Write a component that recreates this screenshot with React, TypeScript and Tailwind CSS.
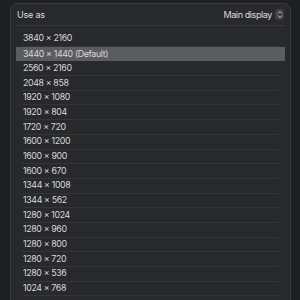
import React from "react";

const rows = [
  "3840 × 2160",
  "3440 × 1440 (Default)",
  "2560 × 2160",
  "2048 × 858",
  "1920 × 1080",
  "1920 × 804",
  "1720 × 720",
  "1600 × 1200",
  "1600 × 900",
  "1600 × 670",
  "1344 × 1008",
  "1344 × 562",
  "1280 × 1024",
  "1280 × 960",
  "1280 × 800",
  "1280 × 720",
  "1280 × 536",
  "1024 × 768",
];

export default function App() {
  return (
    <div
      className="w-[300px] h-[300px] overflow-hidden bg-[#1e1f22] pt-[3px] pl-[10px] pr-[9px]"
      style={{ fontFamily: "Inter, 'Noto Sans', sans-serif" }}
    >
      <div className="h-[320px] rounded-t-[7px] border border-[#3a3b3f] bg-[#28292d] px-[5px]">
        <div className="h-[22px] flex items-center justify-between border-b border-[#36373b] pl-[1px]">
          <span className="text-[9px] text-[#dcdcdc] tracking-[-0.2px]">Use as</span>
          <div className="flex items-center gap-[3px] mr-[1px]">
            <span className="text-[9px] text-[#dcdcdc] tracking-[-0.4px]">Main display</span>
            <div className="w-[9px] h-[11px] rounded-[3px] bg-[#3e3f43] flex items-center justify-center">
              <svg width="6" height="9" viewBox="0 0 6 9" fill="none">
                <path d="M1.2 3.2 L3 1.4 L4.8 3.2" stroke="#d0d0d0" strokeWidth="1" strokeLinecap="round" strokeLinejoin="round" />
                <path d="M1.2 5.8 L3 7.6 L4.8 5.8" stroke="#d0d0d0" strokeWidth="1" strokeLinecap="round" strokeLinejoin="round" />
              </svg>
            </div>
          </div>
        </div>
        <div className="pt-[6px] flex flex-col">
          {rows.map((r, i) => {
            const sel = i === 1;
            return (
              <div
                key={r}
                className={
                  sel
                    ? "h-[14.7px] px-[6px] bg-[#5b5c60]"
                    : "h-[14.7px] px-[6px]"
                }
              >
                <div
                  className={
                    sel
                      ? "h-full flex items-center pl-[1px]"
                      : "h-full flex items-center pl-[1px] border-b border-[#343539]"
                  }
                >
                  <span className="text-[8.8px] text-[#d8d8d8] leading-none tracking-[-0.35px]">{r}</span>
                </div>
              </div>
            );
          })}
        </div>
      </div>
    </div>
  );
}
